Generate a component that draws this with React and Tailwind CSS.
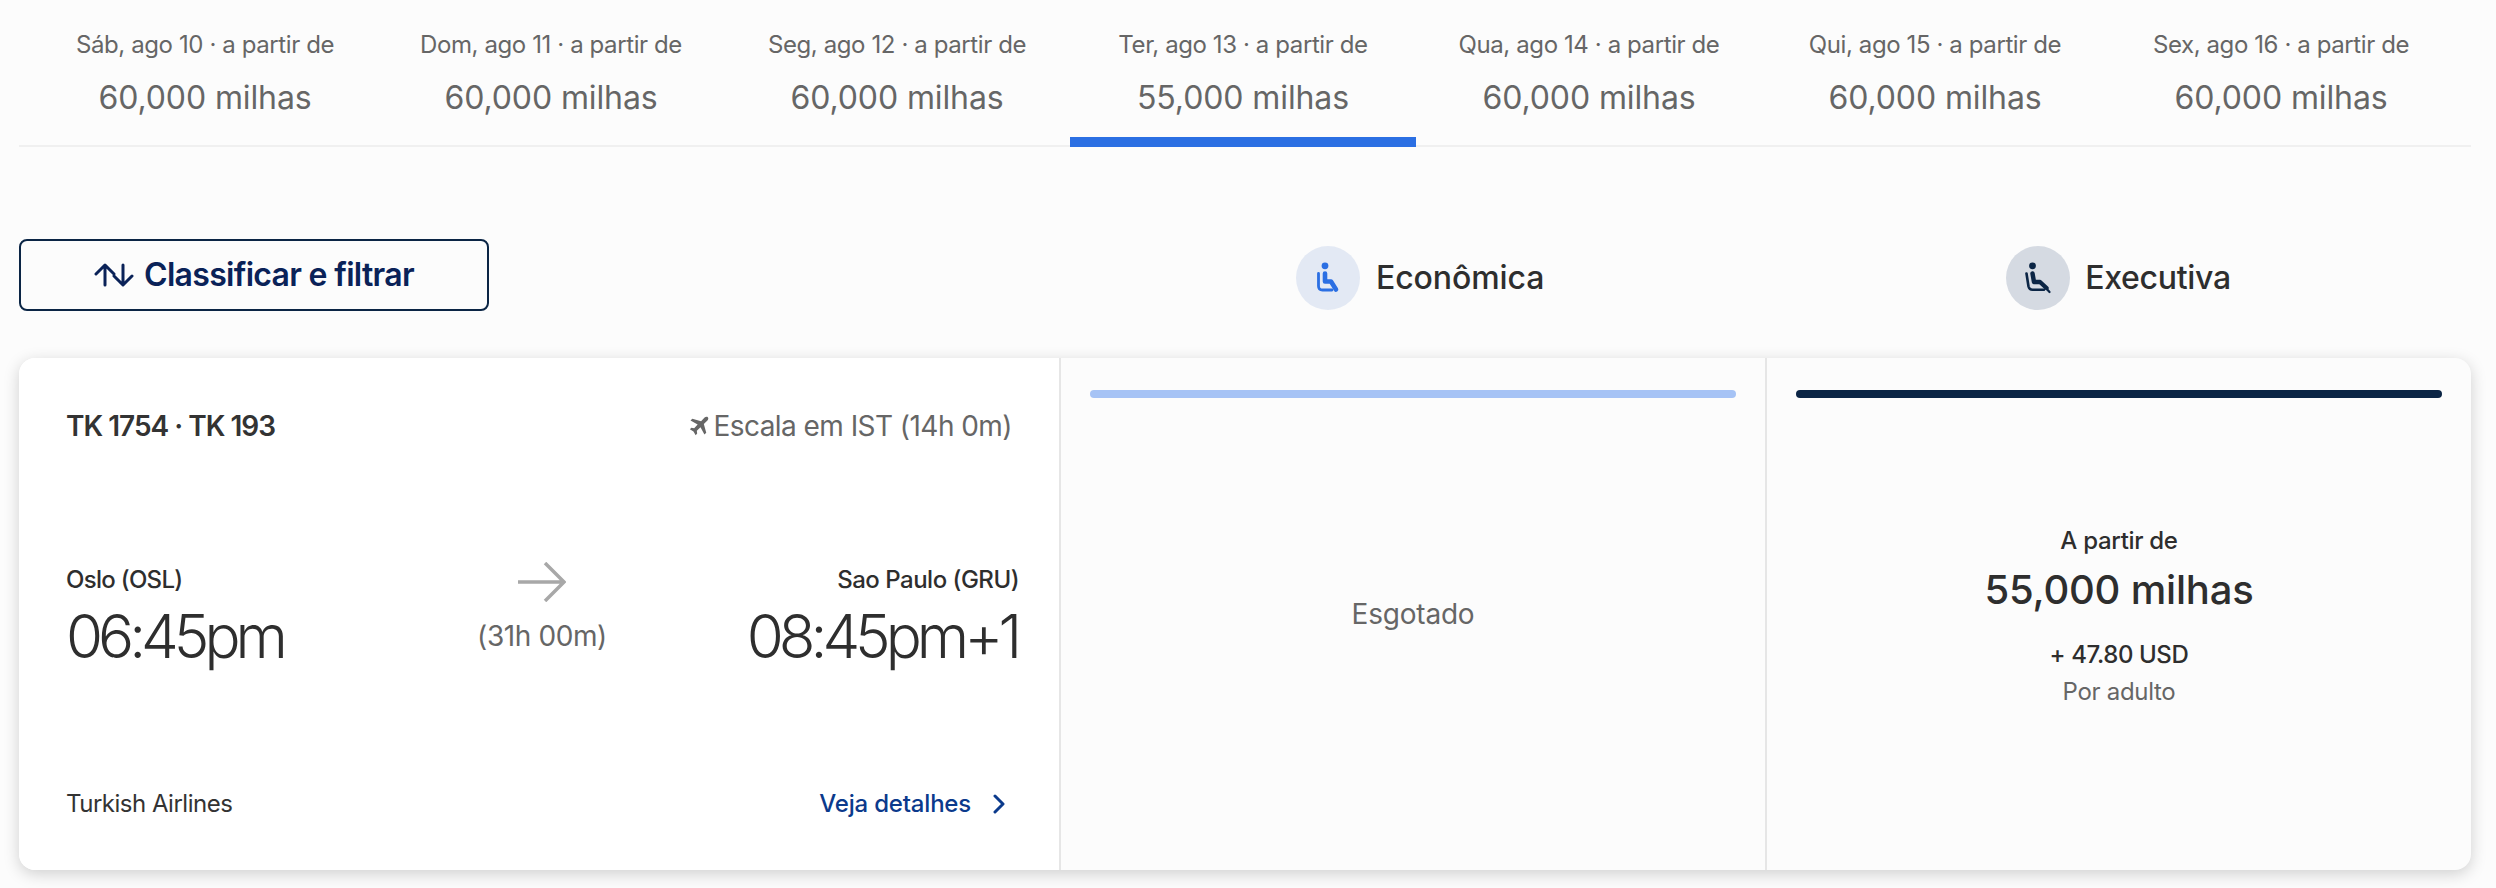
import React from "react";

const days = [
  { label: "Sáb, ago 10 · a partir de", price: "60,000 milhas" },
  { label: "Dom, ago 11 · a partir de", price: "60,000 milhas" },
  { label: "Seg, ago 12 · a partir de", price: "60,000 milhas" },
  { label: "Ter, ago 13 · a partir de", price: "55,000 milhas", active: true },
  { label: "Qua, ago 14 · a partir de", price: "60,000 milhas" },
  { label: "Qui, ago 15 · a partir de", price: "60,000 milhas" },
  { label: "Sex, ago 16 · a partir de", price: "60,000 milhas" },
];

const EconomySeat = () => (
  <svg viewBox="0 0 24 32" className="h-[32px] w-[24px]" fill="none" stroke="currentColor" strokeLinecap="round" strokeLinejoin="round">
    <circle cx="9" cy="3.800" r="3.400" fill="currentColor" stroke="none" />
    <path d="M9 11.500V19.500H15L20 27.500" strokeWidth="4.600" />
    <path d="M2.500 11.500V24C2.500 26.500 4 28 6.500 28H16" strokeWidth="2.800" />
  </svg>
);

const BusinessSeat = () => (
  <svg viewBox="0 0 26 32" className="h-[32px] w-[26px]" fill="none" stroke="currentColor" strokeLinecap="round" strokeLinejoin="round">
    <circle cx="7.500" cy="3.800" r="3.400" fill="currentColor" stroke="none" />
    <path d="M7.500 11.500L9 20H15L21.500 26" strokeWidth="4.400" />
    <path d="M1.500 11.500L3.500 24.500C4 26.500 5.500 27.800 7.500 27.800H19" strokeWidth="2.600" />
    <path d="M20 25L24.500 30" strokeWidth="2.200" />
  </svg>
);

const SortIcon = () => (
  <svg viewBox="0 0 40 24" className="h-6 w-10" fill="none" stroke="currentColor" strokeWidth="3" strokeLinecap="round" strokeLinejoin="round">
    <path d="M11 22V3M2 11l9-9 9 9" />
    <path d="M29 2v19M20 13l9 9 9-9" />
  </svg>
);

const PlaneIcon = () => (
  <svg viewBox="0 0 24 24" className="h-[20px] w-[20px] shrink-0" fill="currentColor">
    <path d="M22.6 1.5c-1-1-2.8-.7-3.9.4l-4.2 4.3L4 3.3 1.8 5.5l8.6 4.7-4.2 4.4-3.3-.4L1 16l4.4 2.7L8 23l1.800-1.900-.4-3.300 4.400-4.200 4.700 8.600 2.200-2.200-2.900-10.500 4.300-4.200c1.100-1.100 1.500-2.800.5-3.800z" />
  </svg>
);

const ThinArrow = () => (
  <svg viewBox="0 0 48 40" className="-mt-[2px] h-[40px] w-[48px] text-[#a8a8a8]" fill="none" stroke="currentColor" strokeWidth="3.5">
    <path d="M0 20h45M27 1l19 19-19 19" />
  </svg>
);

const Chevron = () => (
  <svg viewBox="0 0 12 20" className="h-[20px] w-[12px] text-[#0b3a8c]" fill="none" stroke="currentColor" strokeWidth="3" strokeLinecap="round" strokeLinejoin="round">
    <path d="M2 2l8 8-8 8" />
  </svg>
);

export default function App() {
  return (
    <div className="min-h-[888px] bg-[#fcfcfc] pl-[19px] pr-[25px] font-['Inter',sans-serif] text-[#2e2e2e]">
      <div className="flex h-[147px] justify-center border-b-2 border-[#f0f0f0] pr-[4px]">
        {days.map((day) => (
          <div
            key={day.label}
            className={
              day.active
                ? "-mb-[2px] flex h-[147px] w-[346px] flex-col items-center border-b-[10px] border-[#2b6fe3] pt-[29px] text-[#666666]"
                : "flex w-[346px] flex-col items-center pt-[29px] text-[#666666]"
            }
          >
            <span className="text-[24px] leading-[32px] tracking-[-0.4px]">{day.label}</span>
            <span className="mt-[16px] text-[32px] leading-[42px] tracking-[-0.1px]">{day.price}</span>
          </div>
        ))}
      </div>

      <div className="flex h-[211px] items-start pt-[92px]">
        <button
          type="button"
          className="flex h-[72px] w-[470px] items-center justify-center gap-[10px] rounded-[8px] border-2 border-[#0b2545] text-[32px] font-semibold tracking-[-0.7px] text-[#0a2258]"
        >
          <SortIcon />
          Classificar e filtrar
        </button>
        <div className="ml-[807px] flex items-center gap-[16px] pt-[7px]">
          <span className="flex h-[64px] w-[64px] items-center justify-center rounded-full bg-[#e3e9f4] text-[#2b6fe3]">
            <EconomySeat />
          </span>
          <span className="text-[32px] font-medium tracking-[-0.1px]">Econômica</span>
        </div>
        <div className="ml-[462px] flex items-center gap-[15px] pt-[7px]">
          <span className="flex h-[64px] w-[64px] items-center justify-center rounded-full bg-[#d5dae2] text-[#0b2545]">
            <BusinessSeat />
          </span>
          <span className="text-[32px] font-medium tracking-[-0.3px]">Executiva</span>
        </div>
      </div>

      <div className="flex h-[512px] rounded-[16px] bg-[#fcfcfc] shadow-[0_4px_16px_rgba(0,0,0,0.18)]">
        <div className="flex w-[1040px] flex-col rounded-l-[16px] bg-white pl-[47px] pr-[41px]">
          <div className="flex h-[206px] items-start justify-between pt-[50px]">
            <span className="text-[28px] font-semibold leading-[36px] tracking-[-1px] text-[#333333]">TK 1754 · TK 193</span>
            <span className="mr-[6px] flex items-center gap-[4px] text-[28px] leading-[36px] tracking-[-0.55px] text-[#666666]">
              <PlaneIcon />
              Escala em IST (14h 0m)
            </span>
          </div>
          <div className="grid h-[190px] grid-cols-3">
            <div className="flex flex-col items-start">
              <span className="text-[24px] font-medium leading-[32px] tracking-[-0.7px]">Oslo (OSL)</span>
              <span className="mt-[4px] text-[60px] font-light leading-[72px] tracking-[-5px]">06:45pm</span>
            </div>
            <div className="flex flex-col items-center">
              <ThinArrow />
              <span className="mt-[16px] text-[28px] leading-[36px] tracking-[-0.4px] text-[#666666]">(31h 00m)</span>
            </div>
            <div className="flex flex-col items-end">
              <span className="-mr-[1px] text-[24px] font-medium leading-[32px] tracking-[-0.5px]">Sao Paulo (GRU)</span>
              <span className="mt-[4px] mr-[1px] text-[60px] font-light leading-[72px] tracking-[-5px]">08:45pm+1</span>
            </div>
          </div>
          <div className="flex items-center justify-between pt-[34px]">
            <span className="text-[24px] leading-[32px] tracking-[-0.5px] text-[#333333]">Turkish Airlines</span>
            <span className="flex items-center gap-[22px] pr-[13px] text-[24px] font-medium leading-[32px] tracking-[-0.2px] text-[#0b3a8c]">
              Veja detalhes
              <Chevron />
            </span>
          </div>
        </div>

        <div className="flex w-[706px] flex-col border-l-2 border-[#e6e6e6] px-[29px] pt-[32px]">
          <div className="h-[8px] rounded-full bg-[#a6c3f5]" />
          <div className="flex flex-1 items-center justify-center pb-[40px] text-[28px] tracking-[-0.2px] text-[#666666]">Esgotado</div>
        </div>

        <div className="flex flex-1 flex-col items-center border-l-2 border-[#e6e6e6] px-[29px] pt-[32px]">
          <div className="h-[8px] w-full rounded-full bg-[#0b2545]" />
          <span className="mt-[127px] text-[24px] font-medium leading-[32px] tracking-[-0.3px]">A partir de</span>
          <span className="mt-[7px] text-[40px] font-medium leading-[52px] tracking-[-0.2px]">55,000 milhas</span>
          <span className="mt-[23px] text-[24px] font-medium leading-[32px] tracking-[-0.4px]">+ 47.80 USD</span>
          <span className="mt-[5px] text-[24px] leading-[32px] tracking-[-0.3px] text-[#666666]">Por adulto</span>
        </div>
      </div>
    </div>
  );
}
